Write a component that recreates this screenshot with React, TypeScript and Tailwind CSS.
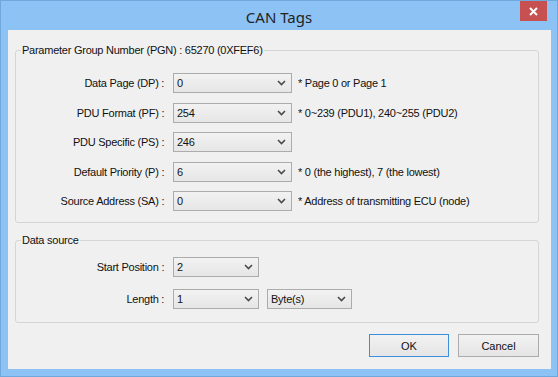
import React from "react";

function Chevron() {
  return (
    <svg width="9" height="6" viewBox="0 0 9 6" className="shrink-0">
      <path d="M1 1 L4.5 4.5 L8 1" fill="none" stroke="#4a4a4a" strokeWidth="1.6" />
    </svg>
  );
}

function Select({ value, width }: { value: string; width: string }) {
  return (
    <div
      className={`${width} h-[20px] shrink-0 flex items-center justify-between border border-[#acacac] bg-gradient-to-b from-[#f2f2f2] to-[#e6e6e6] pl-[3px] pr-[5px]`}
    >
      <span>{value}</span>
      <Chevron />
    </div>
  );
}

function Row({ label, value, hint }: { label: string; value: string; hint?: string }) {
  return (
    <div className="flex items-center h-[20px]">
      <div className="w-[151px] text-right whitespace-pre">{label}</div>
      <div className="ml-[6px]">
        <Select value={value} width="w-[119px]" />
      </div>
      {hint && <div className="ml-[6px] whitespace-pre">{hint}</div>}
    </div>
  );
}

export default function App() {
  return (
    <div className="w-[558px] h-[377px] bg-[#8dc3f4] border border-[#6ea8dc] flex flex-col font-['Liberation_Sans',Arial,sans-serif] text-[11px] tracking-[-0.25px] text-[#111] leading-[14px]">
      <div className="relative h-[29px] shrink-0 flex items-center justify-center">
        <span className="font-['Noto_Sans',sans-serif] text-[15px] tracking-normal text-[#222] mt-[2px]">CAN Tags</span>
        <div className="absolute right-[10px] top-0 w-[27px] h-[20px] bg-[#c75050] flex items-center justify-center">
          <svg width="9" height="9" viewBox="0 0 9 9">
            <path d="M1 1 L8 8 M8 1 L1 8" stroke="#fff" strokeWidth="2" />
          </svg>
        </div>
      </div>
      <div className="ml-[7px] mr-[6px] h-[339px] bg-[#f0f0f0] flex flex-col">
        <fieldset className="ml-[7px] w-[524px] mt-[13px] border border-[#d5d5d5] rounded-[3px] pt-[16px] pb-[11px] flex flex-col gap-[9.5px]">
          <legend className="ml-[5px] px-[1px] leading-[14px]">Parameter Group Number (PGN) : 65270 (0XFEF6)</legend>
          <Row label="Data Page (DP) : " value="0" hint="* Page 0 or Page 1" />
          <Row label="PDU Format (PF) : " value="254" hint="* 0~239 (PDU1), 240~255 (PDU2)" />
          <Row label="PDU Specific (PS) : " value="246" />
          <Row label="Default Priority (P) : " value="6" hint="* 0 (the highest), 7 (the lowest)" />
          <Row label="Source Address (SA) : " value="0" hint="* Address of transmitting ECU (node)" />
        </fieldset>
        <fieldset className="ml-[7px] w-[524px] mt-[10px] border border-[#d5d5d5] rounded-[3px] pt-[10px] pb-[13px] flex flex-col gap-[12px]">
          <legend className="ml-[5px] px-[1px] leading-[14px]">Data source</legend>
          <div className="flex items-center h-[20px]">
            <div className="w-[151px] text-right whitespace-pre">Start Position : </div>
            <div className="ml-[6px]">
              <Select value="2" width="w-[86px]" />
            </div>
          </div>
          <div className="flex items-center h-[20px]">
            <div className="w-[151px] text-right whitespace-pre">Length : </div>
            <div className="ml-[6px] flex gap-[8px]">
              <Select value="1" width="w-[86px]" />
              <Select value="Byte(s)" width="w-[85px]" />
            </div>
          </div>
        </fieldset>
        <div className="ml-[7px] w-[524px] mt-[11px] flex justify-end gap-[9px]">
          <button className="w-[80px] h-[23px] border border-[#3c8fdc] bg-gradient-to-b from-[#f2f2f2] to-[#e5e5e5] tracking-normal">OK</button>
          <button className="w-[81px] h-[23px] border border-[#acacac] bg-gradient-to-b from-[#f2f2f2] to-[#e5e5e5] tracking-normal">Cancel</button>
        </div>
      </div>
    </div>
  );
}
